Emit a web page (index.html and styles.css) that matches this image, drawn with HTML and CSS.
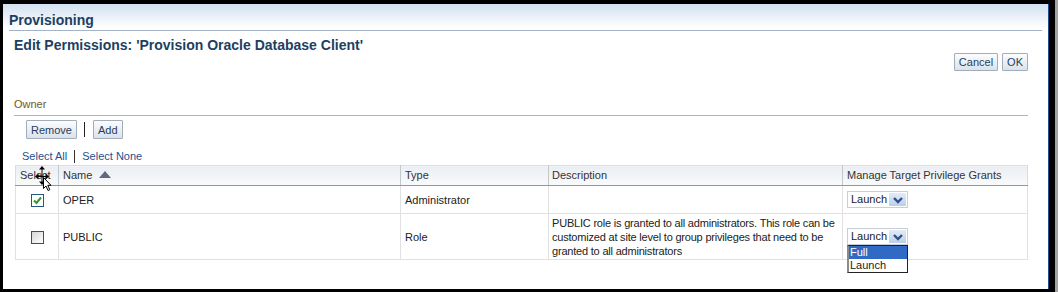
FILE: index.html
```html
<!DOCTYPE html>
<html>
<head>
  <title>Provisioning - Edit Permissions</title>
  <link rel="stylesheet" href="styles.css">
</head>
<body>
  <div class="window">
    <div class="hdr">
      <div class="hdr-title">Provisioning</div>
    </div>

    <div class="page">
      <h1 class="page-title">Edit Permissions: 'Provision Oracle Database Client'</h1>

      <div class="actions">
        <button class="btn">Cancel</button>
        <button class="btn">OK</button>
      </div>

      <div class="section">Owner</div>

      <div class="toolbar">
        <button class="btn">Remove</button>
        <span class="bar"></span>
        <button class="btn">Add</button>
      </div>

      <div class="links">
        <a href="#">Select All</a>
        <span class="bar"></span>
        <a href="#">Select None</a>
      </div>

      <table class="grid">
        <thead>
          <tr>
            <th class="col-sel">
              Select
              <svg class="cursor" width="20" height="26" viewBox="0 0 20 26">
                <line x1="7" y1="2" x2="7" y2="17" stroke="#000" stroke-width="1"/>
                <polygon points="7,0 4,3.5 10,3.5" fill="#000"/>
                <polygon points="7,19 4,15.5 10,15.5" fill="#000"/>
                <line x1="2" y1="10.5" x2="12" y2="10.5" stroke="#000" stroke-width="1"/>
                <polygon points="0,10.5 3.5,7.5 3.5,13.5" fill="#000"/>
                <polygon points="14,10.5 10.5,7.5 10.5,13.5" fill="#000"/>
                <polygon points="8.5,11.5 8.5,22.5 11,20 13,24.5 14.8,23.7 12.8,19.3 16,19.3" fill="#fff" stroke="#000" stroke-width="1"/>
              </svg>
            </th>
            <th class="col-name">Name <span class="sort"></span></th>
            <th class="col-type">Type</th>
            <th class="col-desc">Description</th>
            <th class="col-grant">Manage Target Privilege Grants</th>
          </tr>
        </thead>
        <tbody>
          <tr class="row-short">
            <td class="cell-sel">
              <span class="check on">
                <svg width="11" height="11" viewBox="0 0 11 11"><path d="M2 5.5 L4.5 8 L9 2.5" fill="none" stroke="#2c9c2c" stroke-width="2"/></svg>
              </span>
            </td>
            <td>OPER</td>
            <td>Administrator</td>
            <td class="cell-desc"></td>
            <td>
              <div class="choice">
                <span class="choice-text">Launch</span>
                <span class="choice-btn">
                  <svg width="12" height="8" viewBox="0 0 12 8"><path d="M2 2 L6 6 L10 2" fill="none" stroke="#30508a" stroke-width="2.4"/></svg>
                </span>
              </div>
            </td>
          </tr>
          <tr>
            <td class="cell-sel"><span class="check"></span></td>
            <td>PUBLIC</td>
            <td>Role</td>
            <td class="cell-desc">PUBLIC role is granted to all administrators. This role can be customized at site level to group privileges that need to be granted to all administrators</td>
            <td>
              <div class="choice">
                <span class="choice-text">Launch</span>
                <span class="choice-btn">
                  <svg width="12" height="8" viewBox="0 0 12 8"><path d="M2 2 L6 6 L10 2" fill="none" stroke="#30508a" stroke-width="2.4"/></svg>
                </span>
                <ul class="options">
                  <li class="picked">Full</li>
                  <li>Launch</li>
                </ul>
              </div>
            </td>
          </tr>
        </tbody>
      </table>
    </div>
  </div>
</body>
</html>
```

FILE: styles.css
```css
html {
  background: #000;
}
body {
  margin: 0;
  height: 292px;
  background: #000;
  border-right: 3px solid #a3a3a3;
  font-family: "Liberation Sans", Arial, sans-serif;
  font-size: 11px;
  color: #222;
  overflow: hidden;
}
.window {
  margin: 4px 6px 0 3px;
  padding-top: 0.1px;
  height: 285px;
  background: #fff;
  border-right: 1px solid #1f4f8f;
  overflow: hidden;
}
.hdr {
  padding: 0 6px;
  background: linear-gradient(#d3e1f1, #fff 90%);
}
.hdr-title {
  padding-top: 6px;
  line-height: 20px;
  font-size: 14px;
  font-weight: bold;
  color: #1c3f62;
  border-bottom: 1px solid #a3b3c6;
}
.page {
  padding: 0 20px 0 11px;
}
.page-title {
  margin: 6px 0 0 0;
  line-height: 16px;
  font-size: 14px;
  font-weight: bold;
  color: #1c3f62;
}
.actions {
  display: flex;
  justify-content: flex-end;
  gap: 4px;
}
.btn {
  height: 18px;
  padding: 0 4px;
  border: 1px solid #a2adbb;
  border-radius: 1px;
  background: linear-gradient(#fcfdfe, #dae2ec);
  font-family: "Liberation Sans", Arial, sans-serif;
  font-size: 11px;
  color: #24405f;
}
.section {
  margin-top: 27px;
  line-height: 13px;
  padding-bottom: 4px;
  color: #6f5b22;
  border-bottom: 1px solid #a8b6c7;
}
.toolbar {
  display: flex;
  align-items: center;
  margin: 4px 0 0 12px;
}
.toolbar .btn {
  height: 19px;
}
.toolbar .bar {
  width: 1px;
  height: 15px;
  margin: 0 8px 0 7px;
  background: #222;
}
.links {
  display: flex;
  align-items: center;
  margin: 11px 0 0 8px;
  line-height: 13px;
}
.links a {
  color: #1f4f8e;
  text-decoration: none;
}
.links .bar {
  width: 1px;
  height: 13px;
  margin: 0 7px 0 7px;
  background: #333;
}
.grid {
  margin: 2px 0 0 1px;
  width: 1013px;
  border-collapse: collapse;
  table-layout: fixed;
  border: 1px solid #dcdcdc;
  font-family: "Liberation Sans", Arial, sans-serif;
  font-size: 11px;
}
.grid th {
  position: relative;
  box-sizing: border-box;
  padding: 3px 4px;
  line-height: 13px;
  text-align: left;
  font-weight: normal;
  white-space: nowrap;
  color: #333;
  background: linear-gradient(#eaeef3, #f9fafb);
  border-left: 1px solid #c3c8cf;
  border-bottom: 1px solid #8e98a5;
}
.grid th:first-child {
  border-left: none;
}
.grid th.col-desc {
  padding-left: 3px;
}
.col-sel { width: 43px; }
.col-name { width: 342px; }
.col-type { width: 148px; }
.col-desc { width: 294px; }
.sort {
  display: inline-block;
  width: 0;
  height: 0;
  margin-left: 4px;
  vertical-align: 1px;
  border-left: 6px solid transparent;
  border-right: 6px solid transparent;
  border-bottom: 7px solid #5d6a80;
}
.cursor {
  position: absolute;
  left: 19px;
  top: 0;
}
.grid td {
  padding: 5px 4px;
  line-height: 14px;
  color: #222;
  vertical-align: middle;
  border: 1px solid #e1e1e1;
}
.grid td.cell-desc {
  padding: 2px 2px 1px 3px;
  letter-spacing: -0.2px;
}
.cell-sel {
  text-align: center;
}
.check {
  display: inline-flex;
  align-items: center;
  justify-content: center;
  width: 11px;
  height: 11px;
  vertical-align: middle;
  border: 1px solid #2a5386;
  background: linear-gradient(135deg, #d7d7d7, #fff);
}
.check.on {
  background: #fff;
}
.choice {
  position: relative;
  display: flex;
  width: 59px;
  height: 15px;
  border: 1px solid #c6ced9;
  background: #fff;
}
.choice-text {
  flex: 1;
  padding-left: 3px;
  line-height: 15px;
  color: #222;
}
.choice-btn {
  display: flex;
  align-items: center;
  justify-content: center;
  width: 17px;
  margin: 1px 1px 1px 0;
  background: linear-gradient(#e3ebf7, #bccfe9);
}
.options {
  position: absolute;
  left: -1px;
  top: 16px;
  width: 58px;
  margin: 0;
  padding: 0;
  list-style: none;
  background: #fff;
  border: 1px solid #222;
  border-left: 2px solid #8a8a8a;
}
.options li {
  padding-left: 1px;
  line-height: 13px;
  color: #222;
}
.options li.picked {
  background: #316ac5;
  color: #fff;
}
```
